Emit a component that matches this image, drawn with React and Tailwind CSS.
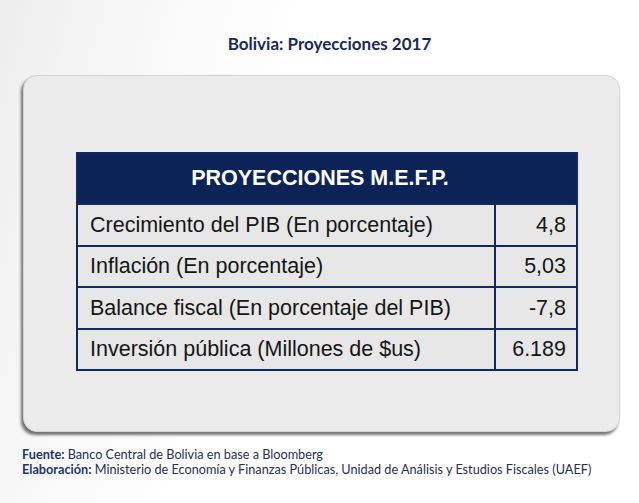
const ROWS = [
  { label: 'Crecimiento del PIB (En porcentaje)', value: '4,8' },
  { label: 'Inflación (En porcentaje)', value: '5,03' },
  { label: 'Balance fiscal (En porcentaje del PIB)', value: '-7,8' },
  { label: 'Inversión pública (Millones de $us)', value: '6.189' },
];

const ProjectionsTable = () => {
  return (
    <div className="ml-[52px] mt-[76px] w-[502px] border-2 border-[#13285c] font-['Liberation_Sans',Arial,sans-serif]">
      <div className="h-[49px] bg-[#0c2358] flex items-center justify-center pr-[14px] text-white font-bold text-[21.5px]">
        PROYECCIONES M.E.F.P.
      </div>
      {ROWS.map((row) => (
        <div key={row.label} className="flex h-[41.5px] border-t-2 border-[#13285c] bg-[#e7e7e8] text-[21.5px] text-[#151515]">
          <div className="flex-1 flex items-center pl-[12px] border-r-2 border-[#13285c]">
            {row.label}
          </div>
          <div className="w-[80px] flex items-center justify-end pr-[10px]">{row.value}</div>
        </div>
      ))}
    </div>
  );
};

const App = () => {
  return (
    <div className="relative w-[639px] h-[503px] overflow-hidden bg-[linear-gradient(105deg,#ededed_0%,#f7f7f7_18%,#ffffff_40%,#ffffff_100%)]">
      <div className="pt-[33px] pl-[20px] text-center font-['Lato',sans-serif] font-bold text-[17px] leading-[22px] text-[#172a5a]">
        Bolivia: Proyecciones 2017
      </div>
      <div className="mt-[20px] ml-[23px] w-[597px] h-[357px] rounded-[14px] bg-[#ebebec] border border-[#d4d4d4] shadow-[-2px_3px_3px_rgba(0,0,0,0.55)] overflow-hidden">
        <ProjectionsTable />
      </div>
      <div className="mt-[15px] ml-[22px] font-['Lato',sans-serif] text-[12.7px] leading-[15px] text-[#1f2f55]">
        <div>
          <span className="font-bold text-[#1b3570]">Fuente:</span> Banco Central de Bolivia en base a Bloomberg
        </div>
        <div>
          <span className="font-bold text-[#1b3570]">Elaboración:</span> Ministerio de Economía y Finanzas Públicas, Unidad de Análisis y Estudios Fiscales (UAEF)
        </div>
      </div>
    </div>
  );
};

export default App;
